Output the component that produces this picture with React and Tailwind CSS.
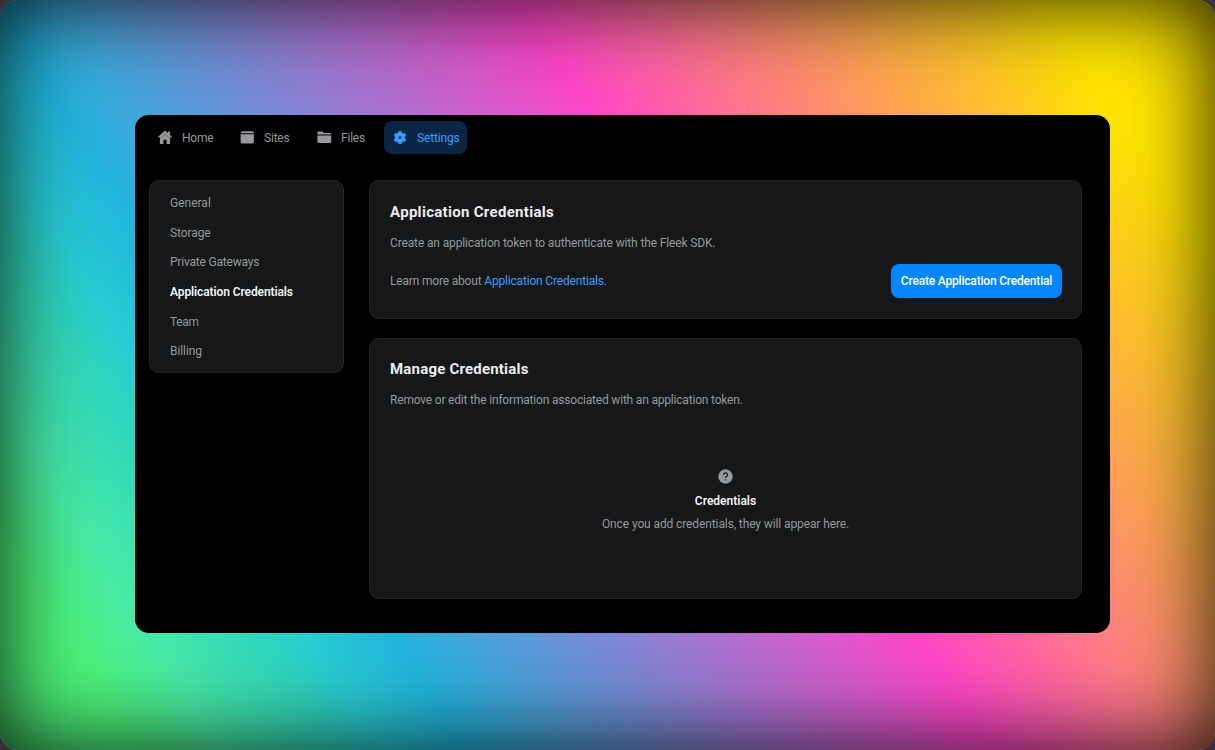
import React from "react";

const NavIcon = ({ name }) => {
  if (name === "Home")
    return (
      <svg width="15" height="15" viewBox="0 0 15 15" fill="currentColor">
        <path d="M6.5 1.1a.8.8 0 0 1 1 0L9.9 3.2V1.6h2V5L13.6 6.6q.3.4 0 .8t-.8.1L12.1 6.9V13.2a.8.8 0 0 1-.8.8H8.6V9.8H5.4V14H2.7a.8.8 0 0 1-.8-.8V6.9L1.2 7.5q-.5.3-.8-.1t0-.8Z" />
        <path d="M2.1 8.5 7 4.1 11.9 8.5" fill="none" stroke="#000" strokeWidth=".5" opacity=".6" />
      </svg>
    );
  if (name === "Sites")
    return (
      <svg width="15" height="15" viewBox="0 0 15 15" fill="currentColor">
        <path d="M2.3 1.3h9.9A1.7 1.7 0 0 1 13.9 3v.3H.6V3A1.7 1.7 0 0 1 2.3 1.3ZM.6 4.2H13.9V11.8a1.7 1.7 0 0 1-1.7 1.7H2.3A1.7 1.7 0 0 1 .6 11.8Z" />
      </svg>
    );
  if (name === "Files")
    return (
      <svg width="15" height="15" viewBox="0 0 15 15" fill="currentColor">
        <path d="M1.6 1.6H5.2L6.9 2.9H13A1.2 1.2 0 0 1 14.2 4.1V4.6H.4V2.8A1.2 1.2 0 0 1 1.6 1.6ZM.4 5.4H14.2V11.8A1.3 1.3 0 0 1 12.9 13.1H1.7A1.3 1.3 0 0 1 .4 11.8Z" />
      </svg>
    );
  return (
    <svg width="15" height="15" viewBox="0 0 15 15" fill="none" stroke="currentColor">
      <circle cx="7" cy="7.5" r="3.4" strokeWidth="3.6" />
      <path d="M7 2.8V1.1M7 12.2V13.9M2.9 5.1 1.5 4.3M11.1 5.1 12.5 4.3M2.9 9.9 1.5 10.7M11.1 9.9 12.5 10.7" strokeWidth="3" />
      <circle cx="7" cy="7.5" r="1" fill="currentColor" stroke="none" opacity=".5" />
    </svg>
  );
};

const menu = [
  ["General", ""],
  ["Storage", "tracking-[-0.1px]"],
  ["Private Gateways", "tracking-[-0.2px]"],
  ["Application Credentials", "font-semibold text-[#f1f3f4] tracking-[-0.1px]"],
  ["Team", "tracking-[-0.3px]"],
  ["Billing", "tracking-[-0.08px]"],
];

const nav = [
  ["Home", "w-[82px]"],
  ["Sites", "w-[77px]"],
  ["Files", "w-[76px]"],
];

export default function App() {
  return (
    <div className="h-[750px] w-[1215px] overflow-hidden bg-[#3a3038] font-['Roboto','Noto_Sans',sans-serif] text-[12px] font-normal text-[#969a9c]">
      <div className="h-full w-full rounded-[18px] bg-[linear-gradient(58deg,#4df37a_8%,#48eba4_13%,#2fd4bf_20%,#28ccd3_22.6%,#22b5dd_27.5%,#ff46c7_58.8%,#ffe600_90%)] pt-[115px] pl-[135px] shadow-[inset_0_0_88px_rgba(0,0,0,0.9)]">
        <div className="h-[518px] w-[975px] rounded-[14px] bg-black pt-1.5 pl-[14px]">
          <nav className="flex h-[33px] items-center text-[12px]">
            {nav.map(([name, width]) => (
              <div key={name} className={`flex items-center gap-[9px] pl-[9px] ${width}`}>
                <NavIcon name={name} />
                <span className="pt-px tracking-[-0.2px]">{name}</span>
              </div>
            ))}
            <div className="flex h-[33px] w-[83px] items-center gap-[9px] rounded-lg bg-[#0b2545] pl-[9px] text-[#3b9eff]">
              <NavIcon name="Settings" />
              <span className="pt-px tracking-[-0.15px]">Settings</span>
            </div>
          </nav>
          <div className="flex items-start gap-[25px] pt-[26px]">
            <aside className="h-[193px] w-[195px] rounded-[10px] border border-[#232628] bg-[#151718] pt-[7.4px] pl-[20px]">
              {menu.map(([label, style]) => (
                <div key={label} className="flex h-[29.6px] items-center">
                  <span className={style}>{label}</span>
                </div>
              ))}
            </aside>
            <main className="flex w-[713px] flex-col gap-[19px]">
              <section className="h-[139px] rounded-[10px] border border-[#232628] bg-[#151718] pt-[21px] pr-[19px] pl-[20px]">
                <h2 className="h-5 text-[15px] leading-5 font-bold tracking-[0.3px] text-[#ecedee]">Application Credentials</h2>
                <p className="mt-3 h-[18px] leading-[18px] tracking-[-0.14px]">Create an application token to authenticate with the Fleek SDK.</p>
                <div className="mt-3 flex h-[34px] items-center justify-between">
                  <p className="tracking-[-0.18px]">Learn more about <span className="text-[#3b9eff]">Application Credentials.</span></p>
                  <button className="h-[34px] w-[171px] rounded-lg bg-[#0486ff] font-medium tracking-[-0.19px] text-white">Create Application Credential</button>
                </div>
              </section>
              <section className="h-[261px] rounded-[10px] border border-[#232628] bg-[#151718] px-[20px] pt-5">
                <h2 className="h-5 text-[15px] leading-5 font-bold tracking-[0.2px] text-[#ecedee]">Manage Credentials</h2>
                <p className="mt-3 h-[18px] leading-[18px] tracking-[-0.19px]">Remove or edit the information associated with an application token.</p>
                <div className="flex flex-col items-center pt-[60px]">
                  <svg width="15" height="15" viewBox="0 0 15 15">
                    <circle cx="7.5" cy="7.5" r="7.2" fill="#969a9c" />
                    <path d="M5.6 6A1.95 1.95 0 1 1 8.4 7.5Q7.5 8 7.5 8.9M7.5 10.2V11.4" fill="none" stroke="#151718" strokeWidth="1.2" />
                  </svg>
                  <p className="mt-2 h-[18px] leading-[18px] font-semibold text-[#f1f3f4]">Credentials</p>
                  <p className="mt-[5px] h-[18px] leading-[18px] tracking-[-0.11px]">Once you add credentials, they will appear here.</p>
                </div>
              </section>
            </main>
          </div>
        </div>
      </div>
    </div>
  );
}
